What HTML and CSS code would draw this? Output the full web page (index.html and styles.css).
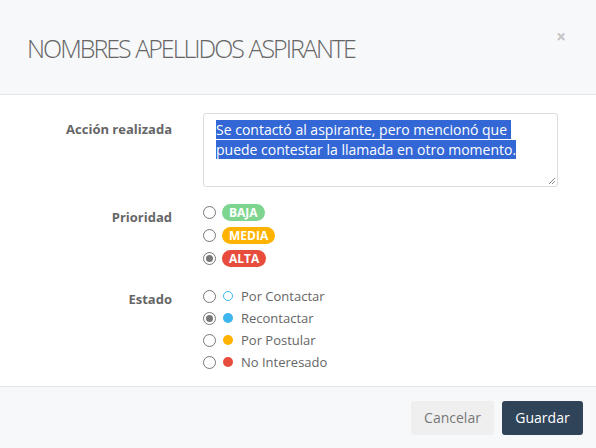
FILE: index.html
```html
<!DOCTYPE html>
<html lang="es">
<head>
<meta charset="utf-8">
<link rel="stylesheet" href="styles.css">
</head>
<body>
<div class="modal">
  <header class="modal-header">
    <h1 class="modal-title">NOMBRES APELLIDOS ASPIRANTE</h1>
    <span class="close">×</span>
  </header>
  <div class="modal-body">
    <div class="row">
      <label class="label">Acción realizada</label>
      <div class="textarea"><span class="sel">Se contactó al aspirante, pero mencionó que </span><span class="sel">puede contestar la llamada en otro momento.</span><svg class="grip" width="9" height="9" viewBox="0 0 9 9"><path d="M8 2L2 8M8 5L5 8" stroke="#888" stroke-width="1"/></svg></div>
    </div>
    <div class="row row-prio">
      <label class="label">Prioridad</label>
      <div class="options prio">
        <div class="opt"><span class="radio"></span><span class="badge green">BAJA</span></div>
        <div class="opt"><span class="radio"></span><span class="badge orange">MEDIA</span></div>
        <div class="opt"><span class="radio checked"></span><span class="badge red">ALTA</span></div>
      </div>
    </div>
    <div class="row row-estado">
      <label class="label">Estado</label>
      <div class="options estado">
        <div class="opt"><span class="radio"></span><span class="dot ring"></span><span class="txt">Por Contactar</span></div>
        <div class="opt"><span class="radio checked"></span><span class="dot blue"></span><span class="txt">Recontactar</span></div>
        <div class="opt"><span class="radio"></span><span class="dot orange"></span><span class="txt">Por Postular</span></div>
        <div class="opt"><span class="radio"></span><span class="dot red"></span><span class="txt">No Interesado</span></div>
      </div>
    </div>
  </div>
  <footer class="modal-footer">
    <button class="btn btn-default">Cancelar</button>
    <button class="btn btn-primary">Guardar</button>
  </footer>
</div>
</body>
</html>
```
FILE: styles.css
```css
* { box-sizing: border-box; }
html, body { margin: 0; padding: 0; background: #fff; }
body { font-family: "Open Sans", "Liberation Sans", sans-serif; color: #555; width: 596px; height: 448px; overflow: hidden; }

.modal { display: flex; flex-direction: column; height: 448px; }

.modal-header {
  height: 95px;
  background: #f7f8fa;
  border-bottom: 1px solid #e3e5e8;
  position: relative;
  padding: 0 27px;
  display: flex;
  align-items: center;
}
.modal-title {
  margin: 0;
  font-family: "Open Sans", sans-serif;
  font-weight: 300;
  font-size: 25px;
  letter-spacing: -2px;
  word-spacing: 1px;
  color: #666;
  line-height: 1;
  padding-top: 2px;
}
.close {
  position: absolute;
  right: 30px;
  top: 28px;
  font-size: 17px;
  color: #c4c4c4;
  font-weight: 700;
  line-height: 1;
}

.modal-body { flex: 1; padding: 18px 39px 0 0; }

.row { display: grid; grid-template-columns: 172px 355px; column-gap: 31px; }
.label { text-align: right; font-size: 13px; font-weight: 700; color: #666; padding-top: 6px; line-height: 20px; }

.textarea {
  position: relative;
  height: 74px;
  border: 1px solid #ddd;
  border-radius: 3px;
  padding: 6px 12px;
  font-size: 14px;
  line-height: 20px;
  color: #fff;
}
.sel { background: #3367d6; color: #fff; white-space: pre-wrap; }
.grip { position: absolute; right: 1px; bottom: 1px; }

.row-prio { margin-top: 14px; }
.row-estado { margin-top: 15px; }
.row-prio .label { padding-top: 6px; }
.row-estado .label { padding-top: 4px; }

.options { display: flex; flex-direction: column; }
.opt { display: flex; align-items: center; }
.prio .opt { height: 23px; }
.estado .opt { height: 22px; }

.radio {
  width: 13px; height: 13px;
  border: 1px solid #777;
  border-radius: 50%;
  background: #fff;
  flex: none;
  position: relative;
}
.radio.checked::after {
  content: "";
  position: absolute;
  left: 2px; top: 2px;
  width: 7px; height: 7px;
  border-radius: 50%;
  background: #777;
}

.badge {
  margin-left: 6px;
  font-size: 12px;
  font-weight: 700;
  color: #fff;
  border-radius: 9px;
  padding: 0 7px;
  height: 17px;
  line-height: 17px;
}
.badge.green { background: #7dd590; }
.badge.orange { background: #ffb300; }
.badge.red { background: #e74c3c; }

.dot { width: 10px; height: 10px; border-radius: 50%; margin-left: 7px; flex: none; }
.dot.ring { border: 1px solid #3db5ee; }
.dot.blue { background: #3db5ee; }
.dot.orange { background: #ffb300; }
.dot.red { background: #e74c3c; }
.txt { margin-left: 8px; font-size: 13px; color: #666; }

.modal-footer {
  height: 62px;
  background: #f7f8fa;
  border-top: 1px solid #e3e5e8;
  display: flex;
  justify-content: flex-end;
  align-items: center;
  gap: 8px;
  padding: 0 13px 0 0;
}
.btn {
  font-family: inherit;
  font-size: 14px;
  height: 34px;
  border: none;
  border-radius: 3px;
  padding: 0 13px;
  cursor: pointer;
}
.btn-default { background: #efefef; color: #777; width: 83px; }
.btn-primary { background: #2f4459; color: #fff; width: 81px; }
```
